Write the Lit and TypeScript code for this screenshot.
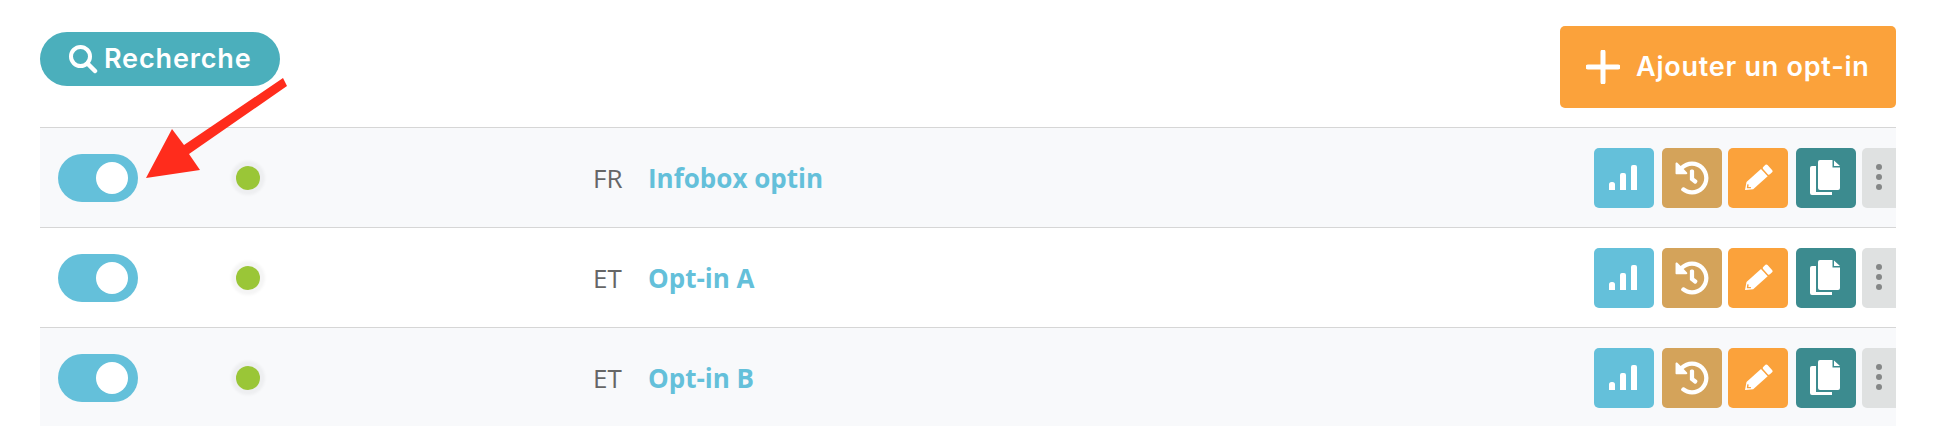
import { LitElement, html, css, svg } from "lit";
import { customElement } from "lit/decorators.js";

const rows = [
  { lang: "FR", name: "Infobox optin", alt: true },
  { lang: "ET", name: "Opt-in A", alt: false },
  { lang: "ET", name: "Opt-in B", alt: true },
];

const signal = svg`<path d="M15 36.5a2.5 2.5 0 0 1 2.5 -2.5h1a2.5 2.5 0 0 1 2.5 2.5V42H15zM26 27a2 2 0 0 1 2 -2h2a2 2 0 0 1 2 2V42h-6zM37 19a2 2 0 0 1 2 -2h2a2 2 0 0 1 2 2V42h-6z" fill="#fff"/>`;
const history = svg`<g transform="translate(13 13) scale(.0664)"><path fill="#fff" d="M504 255.531c.253 136.64-111.18 248.372-247.82 248.468-59.015.042-113.223-20.53-155.822-54.911-11.077-8.94-11.905-25.541-1.839-35.607l11.267-11.267c8.609-8.609 22.353-9.551 31.891-1.984C173.062 425.135 212.781 440 256 440c101.705 0 184-82.311 184-184 0-101.705-82.311-184-184-184-48.814 0-93.149 18.969-126.068 49.932l50.754 50.754c10.08 10.08 2.941 27.314-11.313 27.314H24c-8.837 0-16-7.163-16-16V38.627c0-14.254 17.234-21.393 27.314-11.314l49.372 49.372C129.209 34.136 189.552 8 256 8c136.81 0 247.747 110.78 248 247.531zm-180.912 78.784l9.823-12.63c8.138-10.463 6.253-25.542-4.21-33.679L288 256.349V152c0-13.255-10.745-24-24-24h-16c-13.255 0-24 10.745-24 24v135.651l65.409 50.874c10.463 8.137 25.541 6.253 33.679-4.21z"/></g>`;
const pencil = svg`<g transform="translate(17 42) rotate(-42)"><path fill="#fff" d="M0 0L6.5 -5H26V5H6.5Z"/><rect fill="#fff" x="27.5" y="-5" width="6" height="10" rx="1.5"/><path fill="none" stroke="#fba23b" stroke-width="1.4" d="M6 -2.2L3.5 0L6 2.2"/></g>`;
const copy = svg`<path fill="#fff" d="M24 12H36.5V19.5H44V40a2 2 0 0 1 -2 2H24a2 2 0 0 1 -2 -2V14a2 2 0 0 1 2 -2zM38 12.5L44 18H38zM16 18H20V44H36V47H16a2 2 0 0 1 -2 -2V20a2 2 0 0 1 2 -2z"/>`;
const dots = svg`<g fill="#858787"><circle cx="17" cy="19" r="3"/><circle cx="17" cy="29" r="3"/><circle cx="17" cy="39" r="3"/></g>`;

@customElement("app-root")
export class AppRoot extends LitElement {
  static styles = css`
    :host {
      display: block;
      position: relative;
      width: 1936px;
      height: 426px;
      overflow: hidden;
      background: #fff;
      font-family: "Open Sans", sans-serif;
    }
    .page {
      display: flex;
      flex-direction: column;
      padding: 26px 40px 0;
    }
    .top {
      display: flex;
      justify-content: space-between;
      align-items: flex-start;
      height: 100.5px;
    }
    .search {
      display: flex;
      align-items: center;
      gap: 6px;
      box-sizing: border-box;
      width: 240px;
      height: 54px;
      margin-top: 6px;
      padding-left: 28px;
      border-radius: 27px;
      background: #4bafbc;
      color: #fff;
      font: 600 27px "Inter", sans-serif;
      letter-spacing: 0.85px;
    }
    .search span, .add span { margin-top: -2px; }
    .search svg { width: 30px; height: 30px; flex: none; }
    .add {
      display: flex;
      align-items: center;
      gap: 16px;
      box-sizing: border-box;
      width: 336px;
      height: 82px;
      padding-left: 26px;
      border-radius: 5px;
      background: #fba23b;
      color: #fff;
      font: 600 27px "Inter", sans-serif;
      letter-spacing: 0.75px;
    }
    .add svg { width: 34px; height: 34px; flex: none; }
    .row {
      display: grid;
      grid-template-columns: 178px 357px 55px 1fr auto;
      align-items: center;
      box-sizing: border-box;
      height: 100px;
      padding-left: 18px;
      padding-top: 1.5px;
      border-top: 1.5px solid #d6d6d6;
      background: #fff;
    }
    .row.alt { background: #f8f9fb; }
    .toggle {
      display: flex;
      justify-content: flex-end;
      align-items: center;
      box-sizing: border-box;
      width: 80px;
      height: 48px;
      padding-right: 10px;
      border-radius: 24px;
      background: #64c0da;
    }
    .knob { width: 32px; height: 32px; border-radius: 50%; background: #fff; }
    .dot {
      width: 24px;
      height: 24px;
      border-radius: 50%;
      background: #9ac637;
      box-shadow: 0 0 3px 5px rgba(0, 0, 0, 0.045);
    }
    .lang { font-size: 26px; color: #666; }
    .name { font-size: 26px; font-weight: 700; color: #64c0da; }
    .actions { display: flex; }
    .btn {
      width: 60px;
      height: 60px;
      border-radius: 5px;
      flex: none;
    }
    .btn svg { display: block; width: 100%; height: 100%; }
    .stat { background: #64c0da; margin-right: 8px; }
    .hist { background: #d4a35a; margin-right: 6px; }
    .edit { background: #fba23b; margin-right: 8px; }
    .dup { background: #3c8b8f; margin-right: 6px; }
    .more { background: #dfe1e1; width: 34px; border-radius: 5px 0 0 5px; }
    .arrow {
      position: absolute;
      left: 0;
      top: 0;
      width: 320px;
      height: 240px;
      pointer-events: none;
    }
  `;

  render() {
    return html`
      <div class="page">
        <div class="top">
          <div class="search">
            <svg viewBox="0 0 30 30"><circle cx="12.5" cy="12.5" r="9.5" fill="none" stroke="#fff" stroke-width="4"/><path d="M19.5 19.5L27 27" stroke="#fff" stroke-width="4.5" stroke-linecap="round"/></svg>
            <span>Recherche</span>
          </div>
          <div class="add">
            <svg viewBox="0 0 34 34"><path d="M17 2v30M2 17h30" stroke="#fff" stroke-width="5" stroke-linecap="round"/></svg>
            <span>Ajouter un opt-in</span>
          </div>
        </div>
        ${rows.map(
          (r) => html`
            <div class="row ${r.alt ? "alt" : ""}">
              <div class="toggle"><div class="knob"></div></div>
              <div class="dot"></div>
              <div class="lang">${r.lang}</div>
              <div class="name">${r.name}</div>
              <div class="actions">
                <div class="btn stat"><svg viewBox="0 0 60 60">${signal}</svg></div>
                <div class="btn hist"><svg viewBox="0 0 60 60">${history}</svg></div>
                <div class="btn edit"><svg viewBox="0 0 60 60">${pencil}</svg></div>
                <div class="btn dup"><svg viewBox="0 0 60 60">${copy}</svg></div>
                <div class="btn more"><svg viewBox="0 0 34 60">${dots}</svg></div>
              </div>
            </div>
          `
        )}
      </div>
      <svg class="arrow" viewBox="0 0 320 240"><path fill="#ff2c1c" d="M283 78L287 86L189 154L200 170L146 178L172 129L184 145Z"/></svg>
    `;
  }
}
